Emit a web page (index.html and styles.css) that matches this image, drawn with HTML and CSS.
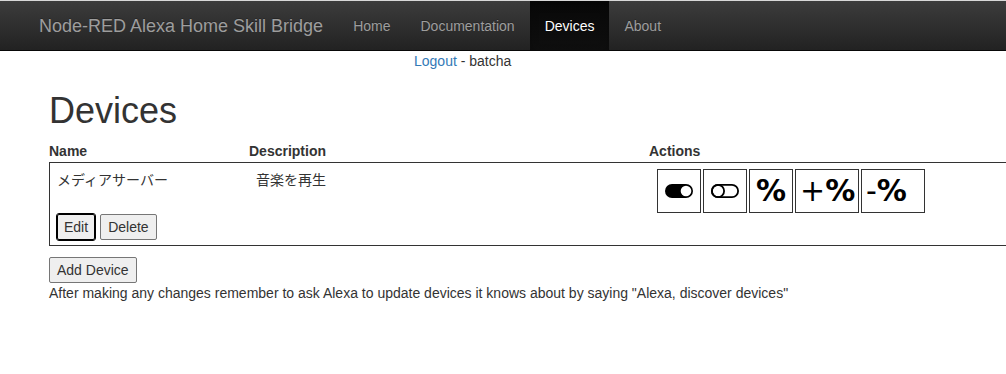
FILE: index.html
```html
<!DOCTYPE html>
<html lang="en">
<head>
    <meta charset="UTF-8">
    <title>Node-RED Alexa Home Skill Bridge</title>
    <link rel="stylesheet" href="styles.css">
</head>
<body>
    <nav class="navbar">
        <a class="brand" href="#">Node-RED Alexa Home Skill Bridge</a>
        <ul class="nav">
            <li><a href="#">Home</a></li>
            <li><a href="#">Documentation</a></li>
            <li class="active"><a href="#">Devices</a></li>
            <li><a href="#">About</a></li>
        </ul>
    </nav>
    <div class="user-line"><a href="#">Logout</a> - batcha</div>

    <div class="container">
        <h1>Devices</h1>
        <div class="cols header">
            <div class="col-name">Name</div>
            <div class="col-desc">Description</div>
            <div class="col-actions">Actions</div>
        </div>
        <div class="cols device">
            <div class="col-name">
                <div>メディアサーバー</div>
                <div class="row-buttons">
                    <button class="btn focused">Edit</button>
                    <button class="btn">Delete</button>
                </div>
            </div>
            <div class="col-desc">音楽を再生</div>
            <div class="col-actions">
                <div class="actions">
                    <span class="action">
                        <svg width="28" height="14" viewBox="0 0 28 14">
                            <rect x="0" y="0" width="28" height="14" rx="7" fill="#000"/>
                            <circle cx="21" cy="7" r="5.3" fill="#fff"/>
                        </svg>
                    </span>
                    <span class="action">
                        <svg width="28" height="14" viewBox="0 0 28 14">
                            <rect x="0.9" y="0.9" width="26.2" height="12.2" rx="6.1" fill="none" stroke="#000" stroke-width="1.8"/>
                            <circle cx="7" cy="7" r="6.1" fill="none" stroke="#000" stroke-width="1.8"/>
                        </svg>
                    </span>
                    <span class="action pct">%</span>
                    <span class="action pct wide"><span class="sign">+</span>%</span>
                    <span class="action pct wide"><span class="sign">-</span>%</span>
                </div>
            </div>
        </div>
        <button class="btn add-btn">Add Device</button>
        <p class="note">After making any changes remember to ask Alexa to update devices it knows about by saying "Alexa, discover devices"</p>
    </div>
</body>
</html>
```

FILE: styles.css
```css
body {
    margin: 0;
    font-family: "Liberation Sans", Arial, sans-serif;
    font-size: 14px;
    line-height: 20px;
    color: #333;
    background: #fff;
}
a {
    color: #337ab7;
    text-decoration: none;
}

/* barra superior */
.navbar {
    display: flex;
    height: 49px;
    border-top: 1px solid #d8d8d8;
    border-bottom: 1px solid #080808;
    background-image: linear-gradient(to bottom, #3c3c3c 0, #222 100%);
    padding-left: 24px;
}
.brand {
    padding: 15px 15px 14px;
    font-size: 18px;
    line-height: 20px;
    color: #9d9d9d;
    text-shadow: 0 -1px 0 rgba(0, 0, 0, 0.25);
}
.nav {
    display: flex;
    margin: 0;
    padding: 0;
    list-style: none;
}
.nav li a {
    display: block;
    padding: 15px 15px 14px;
    color: #9d9d9d;
    text-shadow: 0 -1px 0 rgba(0, 0, 0, 0.25);
}
.nav li.active a {
    color: #fff;
    background-image: linear-gradient(to bottom, #080808 0, #0f0f0f 100%);
    box-shadow: inset 0 3px 9px rgba(0, 0, 0, 0.25);
}
.user-line {
    padding-left: 414px;
}

/* contenido */
.container {
    padding-left: 49px;
}
h1 {
    margin: 20px 0 10px;
    font-size: 36px;
    font-weight: 500;
    line-height: 1.1;
}
.cols {
    display: flex;
}
.col-name {
    width: 200px;
    flex-shrink: 0;
}
.col-desc {
    width: 400px;
    flex-shrink: 0;
}
.col-actions {
    flex: 1;
}
.header {
    font-weight: bold;
}
.device {
    border: 1px solid #333;
    border-right: none;
    height: 82px;
    margin-top: 1px;
    margin-right: -20px;
    font-family: "Liberation Sans", "Noto Sans CJK JP", sans-serif;
}
.device .col-name {
    width: 192px;
    padding: 7px 0 0 7px;
    display: flex;
    flex-direction: column;
    justify-content: space-between;
}
.device .col-desc {
    width: 393px;
    padding: 7px 0 0 7px;
}
.device .col-actions {
    padding: 6px 0 0 8px;
}
.row-buttons {
    display: flex;
    gap: 5px;
    margin-bottom: 5px;
}
.btn {
    font-family: "Liberation Sans", Arial, sans-serif;
    font-size: 14px;
    line-height: 20px;
    color: #333;
    padding: 2px 7px;
    background: #efefef;
    border: 1px solid #767676;
    border-radius: 2px;
}
.btn.focused {
    padding: 2px 6px;
    border-color: #000;
    outline: 1px solid #000;
}
.actions {
    display: flex;
    gap: 2px;
}
.action {
    display: flex;
    align-items: center;
    justify-content: center;
    width: 42px;
    height: 42px;
    border: 1px solid #333;
}
.pct {
    font-family: "DejaVu Sans", Verdana, sans-serif;
    font-weight: bold;
    font-size: 30px;
    color: #000;
}
.pct.wide {
    width: 58px;
    justify-content: flex-start;
    padding-left: 4px;
}
.sign {
    font-weight: normal;
}
.add-btn {
    margin-top: 11px;
}
.note {
    margin: 0;
}
```
